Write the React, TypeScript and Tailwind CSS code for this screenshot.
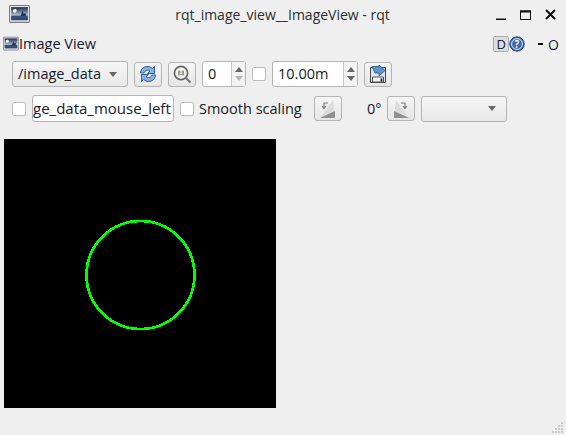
const PictureIcon = ({ className }: { className: string }) => (
  <svg viewBox="0 0 20 18" className={className}>
    <rect x="0.5" y="0.5" width="19" height="16" rx="1" fill="#e8e8e8" stroke="#7a7a7a" />
    <defs>
      <linearGradient id="sky" x1="0" y1="0" x2="0" y2="1">
        <stop offset="0" stopColor="#1c2a52" />
        <stop offset="0.6" stopColor="#a9bad2" />
        <stop offset="0.7" stopColor="#3a5280" />
        <stop offset="1" stopColor="#2d456f" />
      </linearGradient>
    </defs>
    <rect x="2" y="2" width="16" height="12.5" fill="url(#sky)" />
    <circle cx="5.5" cy="5.5" r="1.8" fill="#fff8d0" />
    <path d="M11 10.5l2-5 1 3 2-1v3z" fill="#26324d" />
  </svg>
);

const ToolButton = ({ children, className = "" }: { children?: React.ReactNode; className?: string }) => (
  <div className={`w-[28px] h-[25px] shrink-0 flex items-center justify-center rounded-[3px] border border-[#b4b4b4] bg-gradient-to-b from-[#f6f6f6] to-[#e6e6e6] ${className}`}>
    {children}
  </div>
);

const Check = ({ className = "" }: { className?: string }) => (
  <div className={`w-[14px] h-[14px] shrink-0 rounded-[2px] border border-[#bcbcbc] bg-white ${className}`} />
);

const Combo = ({ text, className = "" }: { text?: string; className?: string }) => (
  <div className={`h-[26px] shrink-0 flex items-center justify-between pl-[5px] pr-[10px] rounded-[3px] border border-[#b4b4b4] bg-gradient-to-b from-[#f6f6f6] to-[#e8e8e8] ${className}`}>
    <span>{text}</span>
    <svg viewBox="0 0 8 5" className="w-[8px] h-[5px]">
      <path d="M0 0h8L4 5z" fill="#666" />
    </svg>
  </div>
);

const Spin = ({ value, className = "", dimDown = false }: { value: string; className?: string; dimDown?: boolean }) => (
  <div className={`h-[26px] shrink-0 flex rounded-[3px] border border-[#b4b4b4] bg-white ${className}`}>
    <span className="flex-1 pl-[5px] leading-[24px]">{value}</span>
    <div className="w-[14px] flex flex-col items-center justify-center gap-[4px] border-l border-[#c8c8c8] bg-[#f4f4f4]">
      <svg viewBox="0 0 8 5" className="w-[8px] h-[5px]">
        <path d="M0 5h8L4 0z" fill="#666" />
      </svg>
      <svg viewBox="0 0 8 5" className="w-[8px] h-[5px]">
        <path d="M0 0h8L4 5z" fill={dimDown ? "#b5b5b5" : "#666"} />
      </svg>
    </div>
  </div>
);

const RotateIcon = ({ flip = false }: { flip?: boolean }) => (
  <svg viewBox="0 0 18 20" className={`w-[18px] h-[20px] ${flip ? "-scale-x-100" : ""}`}>
    <path d="M14 1l2 18H1z" fill="#dcdcdc" />
    <path d="M16 12v7H1z" fill="#8f8f8f" />
    <path d="M9 4H5v5M3 7l2 2.5L7 7" fill="none" stroke="#777" strokeWidth="1.1" />
  </svg>
);

export default function App() {
  return (
    <div className="w-[566px] h-[435px] relative overflow-hidden bg-[#efefef] text-[14.5px] text-[#16202c] font-['Open_Sans','Noto_Sans',sans-serif]">
      {/* title bar */}
      <div className="h-[29px] flex items-center pl-[9px] pr-[10px] relative">
        <PictureIcon className="w-[21px] h-[19px]" />
        <span className="flex-1 text-center text-[14px] text-[#2e2e2e] pl-[39px]">rqt_image_view__ImageView - rqt</span>
        <div className="flex items-center gap-[14px]">
          <svg viewBox="0 0 10 10" className="w-[10px] h-[10px]">
            <path d="M0 8.5h10v1.5H0z" fill="#111" />
          </svg>
          <svg viewBox="0 0 11 10" className="w-[11px] h-[10px]">
            <rect x="0.5" y="1" width="10" height="8.5" fill="none" stroke="#111" />
            <path d="M0 0.5h11v2H0z" fill="#111" />
          </svg>
          <svg viewBox="0 0 11 11" className="w-[11px] h-[11px]">
            <path d="M1 1l9 9M10 1l-9 9" stroke="#111" strokeWidth="2" />
          </svg>
        </div>
      </div>

      {/* dock title */}
      <div className="h-[22px] mt-[4px] flex items-center pl-[3px] pr-[7px]">
        <PictureIcon className="w-[16px] h-[16px]" />
        <span>Image View</span>
        <div className="ml-auto flex items-center">
          <div className="w-[16px] h-[16px] rounded-[2px] border border-[#aaa] bg-[#ddd] text-[13px] leading-[14px] text-center">D</div>
          <svg viewBox="0 0 16 16" className="w-[16px] h-[16px]">
            <circle cx="8" cy="8" r="7.2" fill="#3c68a8" stroke="#1f3f78" />
            <circle cx="8" cy="8" r="5.4" fill="none" stroke="#dfe8f4" />
            <text x="8" y="11.6" textAnchor="middle" fontSize="10" fontWeight="700" fill="#fff">?</text>
          </svg>
          <div className="w-[5px] h-[2px] bg-[#111] ml-[13px]" />
          <span className="ml-[5px] text-[14px]">O</span>
        </div>
      </div>

      {/* toolbar */}
      <div className="mt-[6px] h-[26px] ml-[12px] flex items-center">
        <Combo text="/image_data" className="w-[116px]" />
        <ToolButton className="ml-[6px]">
          <svg viewBox="0 0 20 20" className="w-[20px] h-[20px]">
            <path d="M2.5 9a7 7 0 0 1 12-4.5L16.5 2.500v7h-7l2.500-2.500a3.800 3.800 0 0 0-6 2z" fill="#8fb4dc" stroke="#2f62a8" />
            <path d="M17.500 11a7 7 0 0 1-12 4.500L3.500 17.500v-7h7l-2.500 2.500a3.800 3.800 0 0 0 6-2z" fill="#8fb4dc" stroke="#2f62a8" />
          </svg>
        </ToolButton>
        <ToolButton className="ml-[6px]">
          <svg viewBox="0 0 20 20" className="w-[20px] h-[20px]">
            <circle cx="9" cy="9" r="6.6" fill="#f6f6f0" stroke="#666" strokeWidth="1.7" />
            <path d="M14 14l4.500 4.500" stroke="#777" strokeWidth="2.2" />
            <path d="M7 6.500v5M11 6.500v5" stroke="#444" />
            <path d="M9 7.500v1M9 10v1" stroke="#555" />
          </svg>
        </ToolButton>
        <Spin value="0" dimDown className="w-[44px] ml-[6px]" />
        <Check className="ml-[6px]" />
        <Spin value="10.00m" className="w-[86px] ml-[6px]" />
        <ToolButton className="ml-[6px]">
          <svg viewBox="0 0 20 20" className="w-[20px] h-[20px]">
            <path d="M2.500 3.500h15v15h-15z" fill="#dfe6ef" stroke="#444" />
            <path d="M4.500 13h11v5h-11z" fill="#f2f2f2" stroke="#555" />
            <path d="M12.500 14.500h2v3h-2z" fill="#333" />
            <path d="M4 1.500h7V0l6 5.500-6 5.500V8H7z" transform="translate(0 1)" fill="#5b93cc" stroke="#23507f" strokeWidth="0.8" />
          </svg>
        </ToolButton>
      </div>

      <div className="mt-[8px] h-[27px] ml-[12px] flex items-center">
        <Check />
        <div className="w-[142px] h-[27px] ml-[6px] rounded-[3px] border border-[#b4b4b4] bg-white overflow-hidden text-[15px] leading-[25px] whitespace-nowrap">ge_data_mouse_left</div>
        <Check className="ml-[6px]" />
        <span className="ml-[5px] whitespace-nowrap w-[101px]">Smooth scaling</span>
        <ToolButton className="ml-[14px]">
          <RotateIcon />
        </ToolButton>
        <span className="ml-[25px] w-[20px]">0°</span>
        <ToolButton>
          <RotateIcon flip />
        </ToolButton>
        <Combo className="w-[86px] ml-[6px]" />
      </div>

      {/* image */}
      <div className="mt-[17px] ml-[4px] w-[272px] h-[269px] bg-black flex items-center justify-center">
        <svg viewBox="0 0 272 269" className="w-[272px] h-[269px]">
          <circle cx="136.500" cy="136" r="54" fill="none" stroke="#00ff00" strokeWidth="2.700" shapeRendering="crispEdges" />
        </svg>
      </div>

      {/* size grip */}
      <svg viewBox="0 0 12 12" className="absolute right-[2px] bottom-[1px] w-[12px] h-[12px]">
        <path d="M9 0h2v2H9zM6 3h2v2H6zM9 3h2v2H9zM3 6h2v2H3zM6 6h2v2H6zM9 6h2v2H9zM0 9h2v2H0zM3 9h2v2H3zM6 9h2v2H6zM9 9h2v2H9z" fill="#c9c9c9" />
      </svg>
    </div>
  );
}
